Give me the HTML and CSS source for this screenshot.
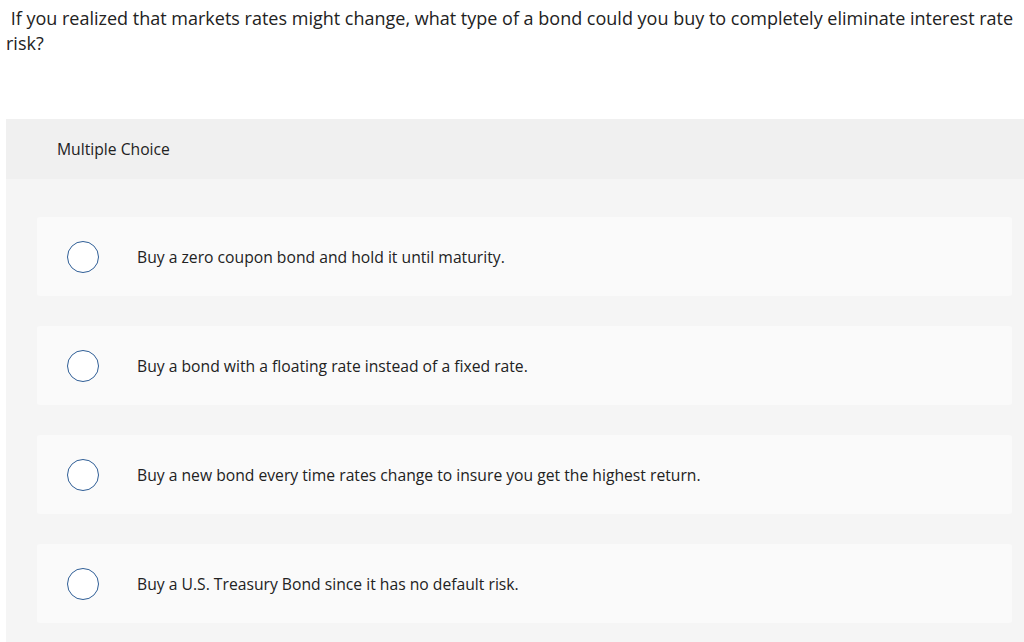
FILE: index.html
```html
<!DOCTYPE html>
<html>
<head>
<meta charset="utf-8">
<link rel="stylesheet" href="styles.css">
</head>
<body>
<div class="question">&nbsp;If you realized that markets rates might change, what type of a bond could you buy to completely eliminate interest rate risk?</div>
<div class="panel">
  <div class="panel-head">Multiple Choice</div>
  <div class="options">
    <div class="option"><span class="radio"></span><span class="label">Buy a zero coupon bond and hold it until maturity.</span></div>
    <div class="option"><span class="radio"></span><span class="label">Buy a bond with a floating rate instead of a fixed rate.</span></div>
    <div class="option"><span class="radio"></span><span class="label">Buy a new bond every time rates change to insure you get the highest return.</span></div>
    <div class="option"><span class="radio"></span><span class="label">Buy a U.S. Treasury Bond since it has no default risk.</span></div>
  </div>
</div>
</body>
</html>
```
FILE: styles.css
```css
html, body {
  margin: 0;
  padding: 0;
  background: #fff;
}
body {
  font-family: "Open Sans", "Lato", sans-serif;
  color: #222;
}
.question {
  padding: 6px 8px 0 6px;
  font-size: 18px;
  line-height: 25px;
  height: 119px;
  box-sizing: border-box;
}
.panel {
  margin-left: 6px;
  background: #f5f5f5;
  padding-bottom: 30px;
}
.panel-head {
  background: #f0f0f0;
  height: 60px;
  display: flex;
  align-items: center;
  padding-left: 51px;
  font-size: 15.7px;
  color: #222;
}
.options {
  padding: 38px 12px 0 31px;
  display: flex;
  flex-direction: column;
  gap: 30px;
}
.option {
  background: #fafafa;
  border-radius: 3px;
  height: 79px;
  display: flex;
  align-items: center;
  padding-left: 30px;
}
.radio {
  width: 30px;
  height: 30px;
  border: 1.5px solid #2f5e96;
  border-radius: 50%;
  background: #fff;
  flex: none;
}
.label {
  margin-left: 38px;
  font-size: 15.7px;
  color: #222;
}
```
